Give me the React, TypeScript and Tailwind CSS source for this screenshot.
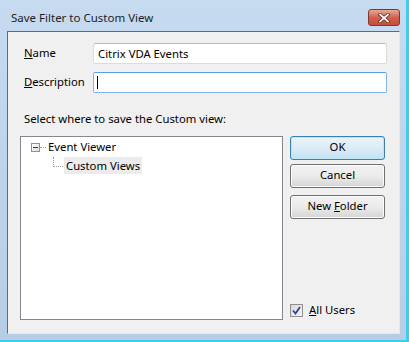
import { useState } from 'react';

const font = { fontFamily: '"Noto Sans", "Open Sans", sans-serif' };

export default function App() {
  const [name, setName] = useState('Citrix VDA Events');
  const [desc, setDesc] = useState('');
  const [allUsers, setAllUsers] = useState(true);

  return (
    <div
      className="w-[409px] h-[342px] flex flex-col bg-gradient-to-b from-[#c6daf0] to-[#b7cde6] border-r-[3px] border-b-[2px] border-[#38d0ee] text-[11.3px] text-black overflow-hidden"
      style={font}
    >
      {/* title bar */}
      <div className="h-[31px] flex items-start pl-[11px] pr-[6px] shrink-0">
        <div className="flex-1 pt-[9px] text-[11.5px] text-[#1e1e1e]">Save Filter to Custom View</div>
        <button className="w-[32px] h-[17px] mt-[9px] rounded-[3px] border border-[#7a3a32] bg-gradient-to-b from-[#e7a796] via-[#d2604f] to-[#c84a37] flex items-center justify-center">
          <svg width="12" height="10" viewBox="0 0 12 10">
            <path d="M2 1.5 L10 8.5 M10 1.5 L2 8.5" stroke="#5a2418" strokeWidth="3.2" strokeLinecap="square" />
            <path d="M2 1.5 L10 8.5 M10 1.5 L2 8.5" stroke="#fff" strokeWidth="1.8" strokeLinecap="square" />
          </svg>
        </button>
      </div>

      {/* client area */}
      <div className="flex-1 flex pl-[7px] pr-[6px] pb-[6px]">
        <div className="flex-1 bg-[#f0f0f0] border-l border-t border-[#5f6b78] border-r border-r-[#dfe6ee] border-b border-b-[#dfe6ee] pt-[11px] pl-[15px] pr-[12px]">
          <div className="flex items-center h-[21px]">
            <label className="w-[70px] pl-[1px]"><span className="underline">N</span>ame</label>
            <input
              value={name}
              onChange={e => setName(e.target.value)}
              className="flex-1 h-[21px] border border-[#d9dde2] border-t-[#b9bdc2] rounded-[2px] bg-white px-[4px] outline-none text-[11.3px]"
            />
          </div>
          <div className="flex items-center h-[21px] mt-[8px]">
            <label className="w-[70px] pl-[1px]"><span className="underline">D</span>escription</label>
            <div className="flex-1 h-[21px] border border-[#7eb4ea] border-t-[#569de5] rounded-[2px] bg-white flex items-center pl-[3px]">
              <div className="w-px h-[13px] bg-black shrink-0" />
              <input
                value={desc}
                onChange={e => setDesc(e.target.value)}
                className="flex-1 h-full outline-none text-[11.3px] bg-transparent"
              />
            </div>
          </div>

          <div className="mt-[18px] pl-[1px]">Select where to save the Custom view:</div>

          <div className="flex mt-[8px] ml-[-3px]">
            <div className="w-[263px] h-[184px] bg-white border border-[#828790] pt-[1px] pl-[10px] shrink-0">
              <div className="flex items-center h-[19px]">
                <div className="w-[9px] h-[9px] border border-[#919191] bg-gradient-to-br from-white to-[#dcdcdc] flex items-center justify-center">
                  <div className="w-[5px] h-px bg-[#1e3287]" />
                </div>
                <div className="w-[6px] border-t border-dotted border-[#a0a0a0]" />
                <span className="ml-[2px]">Event Viewer</span>
              </div>
              <div className="flex h-[19px] pl-[22px]">
                <div className="w-[10px] h-[10px] border-l border-b border-dotted border-[#a0a0a0]" />
                <span className="ml-[1px] px-[2px] bg-[#ebebeb] h-[17px] leading-[17px]">Custom Views</span>
              </div>
            </div>

            <div className="flex-1 flex flex-col pl-[7px]">
              <button className="h-[24px] w-[95px] rounded-[3px] border border-[#3c7fb1] bg-gradient-to-b from-[#ebf4fa] via-[#dcecf7] to-[#c4e0f2] shadow-[inset_0_0_0_1px_#bde4f7]">OK</button>
              <button className="h-[24px] w-[95px] mt-[4px] rounded-[3px] border border-[#707070] bg-gradient-to-b from-[#f2f2f2] via-[#ebebeb] to-[#d5d5d5] shadow-[inset_0_0_0_1px_#fcfcfc]">Cancel</button>
              <button className="h-[24px] w-[95px] mt-[7px] rounded-[3px] border border-[#707070] bg-gradient-to-b from-[#f2f2f2] via-[#ebebeb] to-[#d5d5d5] shadow-[inset_0_0_0_1px_#fcfcfc]">New <span className="underline">F</span>older</button>
              <div className="flex-1" />
              <label className="flex items-center mb-[1px]" onClick={() => setAllUsers(!allUsers)}>
                <span className="w-[13px] h-[13px] border border-[#8e8f8f] bg-gradient-to-br from-[#d6d9dd] to-[#f4f4f4] flex items-center justify-center">
                  {allUsers && (
                    <svg width="9" height="9" viewBox="0 0 9 9">
                      <path d="M1 4.5 L3.5 7.5 L8 1" stroke="#32468c" strokeWidth="1.8" fill="none" />
                    </svg>
                  )}
                </span>
                <span className="ml-[6px]"><span className="underline">A</span>ll Users</span>
              </label>
            </div>
          </div>
        </div>
      </div>
    </div>
  );
}
